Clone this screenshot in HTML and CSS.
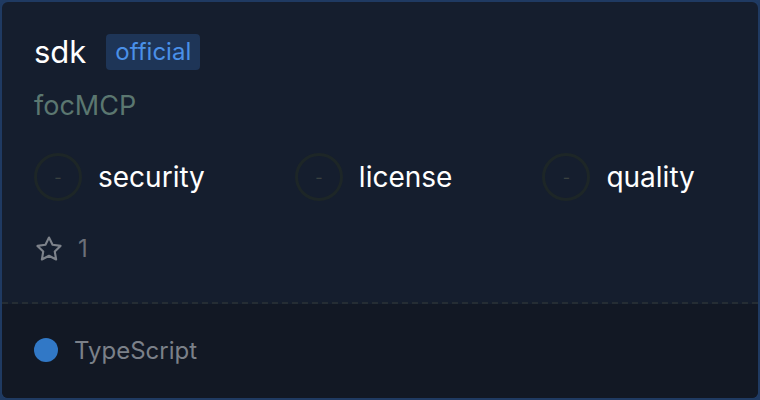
FILE: index.html
```html
<!DOCTYPE html>
<html>
<head>
<meta charset="utf-8">
<link rel="stylesheet" href="styles.css">
</head>
<body>
<div class="card">
  <div class="main">
    <div class="title-row">
      <span class="name">sdk</span>
      <span class="badge">official</span>
    </div>
    <div class="owner">focMCP</div>
    <div class="metrics">
      <div class="metric"><span class="ring">-</span><span class="label">security</span></div>
      <div class="metric"><span class="ring">-</span><span class="label">license</span></div>
      <div class="metric"><span class="ring">-</span><span class="label">quality</span></div>
    </div>
    <div class="stars">
      <svg class="star" viewBox="0 0 24 24" width="30" height="30" fill="none" stroke="currentColor" stroke-width="1.7" stroke-linejoin="round"><path d="M12 2.8l2.85 5.78 6.38.93-4.62 4.5 1.09 6.36L12 17.37l-5.7 3 1.09-6.36-4.62-4.5 6.38-.93z"/></svg>
      <span class="count">1</span>
    </div>
  </div>
  <div class="footer">
    <span class="dot"></span>
    <span class="lang">TypeScript</span>
  </div>
</div>
</body>
</html>
```

FILE: styles.css
```css
html, body {
  margin: 0;
  padding: 0;
  background: #1f3a62;
}
body {
  width: 760px;
  height: 400px;
  font-family: Inter, "Noto Sans", sans-serif;
}
.card {
  box-sizing: border-box;
  width: 760px;
  height: 400px;
  border: 2px solid #1f3a62;
  border-radius: 8px;
  background: #151e2e;
  overflow: hidden;
  display: flex;
  flex-direction: column;
}
.main {
  padding: 32px 32px 0;
  height: 268px;
  border-bottom: 2px dashed #252d34;
}
.title-row {
  display: flex;
  align-items: center;
  gap: 20px;
  height: 36px;
}
.name {
  color: #ffffff;
  font-size: 31px;
  line-height: 36px;
}
.badge {
  background: #1e3557;
  color: #4a90e8;
  font-size: 24px;
  line-height: 36px;
  padding: 0 9px;
  border-radius: 4px;
}
.owner {
  margin-top: 20px;
  color: #5b7770;
  font-size: 27px;
  line-height: 32px;
}
.metrics {
  margin-top: 31px;
  display: flex;
  gap: 90px;
}
.metric {
  display: flex;
  align-items: center;
  gap: 16px;
}
.ring {
  box-sizing: border-box;
  width: 48px;
  height: 48px;
  border: 3px solid #1d2627;
  border-radius: 50%;
  display: flex;
  align-items: center;
  justify-content: center;
  color: #3a4140;
  font-size: 16px;
}
.label {
  color: #ffffff;
  font-size: 28px;
}
.stars {
  margin-top: 33px;
  display: flex;
  align-items: center;
  gap: 14px;
  color: #7d828a;
}
.star {
  display: block;
}
.count {
  font-size: 24px;
  line-height: 30px;
  color: #6b7079;
}
.footer {
  flex: 1;
  background: #121824;
  display: flex;
  align-items: center;
  gap: 16px;
  padding: 0 32px 2px;
}
.dot {
  width: 24px;
  height: 24px;
  border-radius: 50%;
  background: #3178c6;
}
.lang {
  color: #7b8089;
  font-size: 24px;
}
```
